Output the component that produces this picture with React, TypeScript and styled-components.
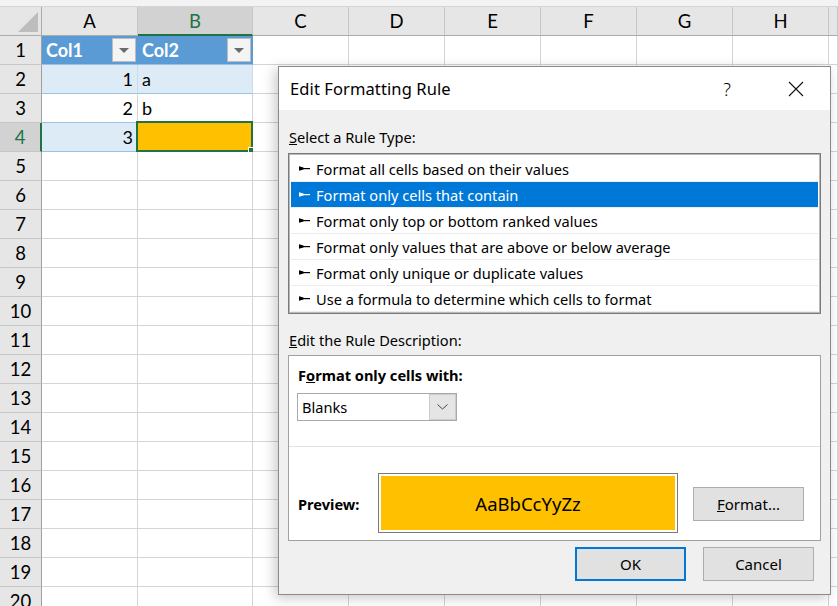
import React from "react";
import styled, { createGlobalStyle, css } from "styled-components";

const GlobalStyle = createGlobalStyle`
  html, body { margin: 0; padding: 0; background: #ffffff; }
  body { width: 838px; height: 606px; overflow: hidden; }
  * { box-sizing: border-box; }
`;

const SHEET_FONT = `Lato, "Liberation Sans", sans-serif`;
const UI_FONT = `"Noto Sans", "Open Sans", sans-serif`;

const GREEN = "#217346";

/* ---------- worksheet ---------- */

const Screen = styled.div`
  position: relative;
  width: 838px;
  height: 606px;
  overflow: hidden;
  background: #ffffff;
`;

const TopStrip = styled.div`
  height: 7px;
  background: #f3f3f3;
  border-bottom: 1px solid #d5d5d5;
`;

const Grid = styled.div`
  display: grid;
  grid-template-columns: 42px 96px 115px 96px 96px 96px 96px 96px 96px 1fr;
  grid-auto-rows: 29px;
  font-family: ${SHEET_FONT};
  color: #000;
`;

const Corner = styled.div`
  position: relative;
  background: #e6e6e6;
  border-right: 1px solid #ababab;
  border-bottom: 1px solid #ababab;
  &::after {
    content: "";
    position: absolute;
    right: 3px;
    bottom: 3px;
    width: 0;
    height: 0;
    border-left: 20px solid transparent;
    border-bottom: 20px solid #bdbdbd;
  }
`;

const ColHead = styled.div<{ $active?: boolean }>`
  display: flex;
  align-items: center;
  justify-content: center;
  font-size: 18.5px;
  background: ${(p) => (p.$active ? "#d2d2d2" : "#e6e6e6")};
  color: ${(p) => (p.$active ? GREEN : "#000")};
  border-right: 1px solid #c6c6c6;
  border-bottom: ${(p) => (p.$active ? `2px solid ${GREEN}` : "1px solid #ababab")};
`;

const RowHead = styled.div<{ $active?: boolean }>`
  display: flex;
  align-items: center;
  justify-content: center;
  font-size: 18.5px;
  background: ${(p) => (p.$active ? "#d2d2d2" : "#e6e6e6")};
  color: ${(p) => (p.$active ? GREEN : "#000")};
  border-right: ${(p) => (p.$active ? `2px solid ${GREEN}` : "1px solid #9f9f9f")};
  border-bottom: 1px solid #c6c6c6;
`;

type CellKind = "plain" | "tableHead" | "band" | "row";

const Cell = styled.div<{ $kind?: CellKind; $align?: "left" | "right"; $fill?: string }>`
  position: relative;
  display: flex;
  align-items: center;
  justify-content: ${(p) => (p.$align === "right" ? "flex-end" : "flex-start")};
  padding: 0 4px;
  font-size: 18px;
  border-right: 1px solid #d4d4d4;
  border-bottom: 1px solid #d4d4d4;
  background: #ffffff;
  ${(p) =>
    p.$kind === "tableHead" &&
    css`
      background: #5b9bd5;
      color: #ffffff;
      font-weight: 700;
      border-right-color: #5b9bd5;
      border-bottom-color: #9bc2e6;
      justify-content: space-between;
      padding-right: 1px;
    `}
  ${(p) =>
    p.$kind === "band" &&
    css`
      background: #ddebf7;
      border-bottom-color: #9bc2e6;
      border-right-color: #c9dcef;
    `}
  ${(p) =>
    p.$kind === "row" &&
    css`
      border-bottom-color: #9bc2e6;
    `}
  ${(p) =>
    p.$fill &&
    css`
      background: ${p.$fill};
    `}
`;

const FilterButton = styled.span`
  display: flex;
  align-items: center;
  justify-content: center;
  width: 24px;
  height: 24px;
  background: #f4f4f4;
  border: 1px solid #bdbdbd;
  &::before {
    content: "";
    border-left: 5px solid transparent;
    border-right: 5px solid transparent;
    border-top: 5px solid #6b6b6b;
    margin-top: 1px;
  }
`;

const Selection = styled.span`
  position: absolute;
  left: -2px;
  top: -2px;
  right: -1px;
  bottom: -1px;
  border: 2px solid ${GREEN};
  pointer-events: none;
`;

const FillHandle = styled.span`
  position: absolute;
  right: -5px;
  bottom: -5px;
  width: 7px;
  height: 7px;
  background: ${GREEN};
  outline: 1px solid #ffffff;
`;

/* ---------- dialog ---------- */

const Dialog = styled.div`
  position: absolute;
  left: 278px;
  top: 66px;
  width: 553px;
  height: 529px;
  display: flex;
  flex-direction: column;
  background: #f0f0f0;
  border: 1px solid #8a8a8a;
  box-shadow: -3px 3px 12px rgba(0, 0, 0, 0.22);
  font-family: ${UI_FONT};
  font-size: 14.6px;
  color: #000;
`;

const TitleBar = styled.div`
  display: flex;
  align-items: center;
  height: 43px;
  flex-shrink: 0;
  background: #ffffff;
  padding-left: 11px;
`;

const Title = styled.div`
  flex: 1;
  font-size: 16.5px;
  letter-spacing: 0.1px;
`;

const Controls = styled.div`
  display: flex;
  align-items: center;
  gap: 39px;
  margin-right: 19px;
`;

const TitleButton = styled.span`
  display: flex;
  align-items: center;
  justify-content: center;
  width: 30px;
  height: 30px;
  font-size: 18px;
  font-weight: 300;
`;

const Body = styled.div`
  flex: 1;
  display: flex;
  flex-direction: column;
  padding: 0 9px 0 9px;
`;

const SectionLabel = styled.div<{ $top: number }>`
  margin-top: ${(p) => p.$top}px;
  margin-left: 1px;
  height: 20px;
  line-height: 20px;
`;

const RuleList = styled.div`
  margin-top: 6px;
  height: 161px;
  background: #ffffff;
  border: 1px solid #7a7a7a;
  box-shadow: inset 0 0 0 1px #b9b9b9;
  padding: 2px 2px;
`;

const RuleItem = styled.div<{ $selected?: boolean }>`
  display: flex;
  align-items: center;
  gap: 6px;
  height: 26px;
  padding-left: 8px;
  border-bottom: 1px solid #ececec;
  background: ${(p) => (p.$selected ? "#0078d7" : "transparent")};
  color: ${(p) => (p.$selected ? "#ffffff" : "#000000")};
`;

const DescBox = styled.div`
  margin-top: 5px;
  height: 186px;
  display: flex;
  flex-direction: column;
  background: #ffffff;
  border: 1px solid #a0a0a0;
`;

const CriteriaArea = styled.div`
  height: 91px;
  padding: 9px 8px 0 8px;
  border-bottom: 1px solid #e3e3e3;
`;

const Strong = styled.div`
  font-weight: 700;
  height: 20px;
  line-height: 20px;
  padding-left: 1px;
`;

const Combo = styled.div`
  margin-top: 8px;
  display: flex;
  width: 160px;
  height: 28px;
  border: 1px solid #a9a9a9;
  background: #ffffff;
`;

const ComboText = styled.span`
  flex: 1;
  display: flex;
  align-items: center;
  padding-left: 4px;
`;

const ComboArrow = styled.span`
  width: 27px;
  display: flex;
  align-items: center;
  justify-content: center;
  background: #e5e5e5;
  border: 1px solid #cccccc;
  margin: 0;
`;

const PreviewArea = styled.div`
  display: flex;
  align-items: center;
  padding: 26px 0 0 9px;
`;

const PreviewLabel = styled.div`
  width: 80px;
  font-weight: 700;
  padding-top: 2px;
`;

const PreviewBox = styled.div`
  width: 300px;
  height: 60px;
  padding: 2px;
  border: 1px solid #7a7a7a;
  background: #ffffff;
`;

const PreviewFill = styled.div`
  height: 100%;
  display: flex;
  align-items: center;
  justify-content: center;
  background: #ffc000;
  font-size: 18.5px;
  padding-top: 1px;
`;

const Button = styled.button<{ $default?: boolean }>`
  width: 111px;
  height: 34px;
  font-family: ${UI_FONT};
  font-size: 15px;
  color: #000;
  background: #e1e1e1;
  border: ${(p) => (p.$default ? "2px solid #0078d7" : "1px solid #adadad")};
  padding: 0;
`;

const FormatButton = styled(Button)`
  margin-left: 15px;
  margin-top: 2px;
`;

const ButtonRow = styled.div`
  margin-top: 6px;
  display: flex;
  justify-content: flex-end;
  gap: 17px;
  padding-right: 7px;
`;

/* ---------- small drawings ---------- */

const RuleArrow = ({ color }: { color: string }) => (
  <svg width="11" height="7" viewBox="0 0 11 7" aria-hidden>
    <path d="M0 1.2 L4.5 2.6 L4.5 4.4 L0 5.8 Z" fill={color} />
    <rect x="4" y="3" width="7" height="1.2" fill={color} />
  </svg>
);

const CloseIcon = () => (
  <svg width="16" height="16" viewBox="0 0 16 16" aria-hidden>
    <path d="M1 1 L15 15 M15 1 L1 15" stroke="#111" strokeWidth="1.1" fill="none" />
  </svg>
);

const Chevron = () => (
  <svg width="11" height="6" viewBox="0 0 11 6" aria-hidden>
    <path d="M0.5 0.5 L5.5 5 L10.5 0.5" stroke="#444" strokeWidth="1" fill="none" />
  </svg>
);

/* ---------- data ---------- */

const COLUMNS = ["A", "B", "C", "D", "E", "F", "G", "H", ""];
const ROW_COUNT = 20;

const RULES = [
  "Format all cells based on their values",
  "Format only cells that contain",
  "Format only top or bottom ranked values",
  "Format only values that are above or below average",
  "Format only unique or duplicate values",
  "Use a formula to determine which cells to format",
];

const tableRows: Record<number, { a: string; b: string; kind: CellKind }> = {
  2: { a: "1", b: "a", kind: "band" },
  3: { a: "2", b: "b", kind: "row" },
  4: { a: "3", b: "", kind: "band" },
};

function SheetRow({ r }: { r: number }) {
  const emptyTail = COLUMNS.slice(2).map((c, i) => <Cell key={`${r}-${i}`} />);
  if (r === 1) {
    return (
      <>
        <RowHead>{r}</RowHead>
        <Cell $kind="tableHead">
          Col1
          <FilterButton />
        </Cell>
        <Cell $kind="tableHead">
          Col2
          <FilterButton />
        </Cell>
        {emptyTail}
      </>
    );
  }
  const t = tableRows[r];
  if (t) {
    const selected = r === 4;
    return (
      <>
        <RowHead $active={selected}>{r}</RowHead>
        <Cell $kind={t.kind} $align="right">
          {t.a}
        </Cell>
        <Cell $kind={t.kind} $fill={selected ? "#ffc000" : undefined}>
          {t.b}
          {selected && (
            <Selection>
              <FillHandle />
            </Selection>
          )}
        </Cell>
        {emptyTail}
      </>
    );
  }
  return (
    <>
      <RowHead>{r}</RowHead>
      <Cell />
      <Cell />
      {emptyTail}
    </>
  );
}

export default function App() {
  return (
    <Screen>
      <GlobalStyle />
      <TopStrip />
      <Grid>
        <Corner />
        {COLUMNS.map((c, i) => (
          <ColHead key={i} $active={c === "B"}>
            {c}
          </ColHead>
        ))}
        {Array.from({ length: ROW_COUNT }, (_, i) => (
          <SheetRow key={i} r={i + 1} />
        ))}
      </Grid>

      <Dialog>
        <TitleBar>
          <Title>Edit Formatting Rule</Title>
          <Controls>
            <TitleButton>?</TitleButton>
            <TitleButton>
              <CloseIcon />
            </TitleButton>
          </Controls>
        </TitleBar>
        <Body>
          <SectionLabel $top={17}>
            <u>S</u>elect a Rule Type:
          </SectionLabel>
          <RuleList>
            {RULES.map((rule, i) => (
              <RuleItem key={rule} $selected={i === 1}>
                <RuleArrow color={i === 1 ? "#ffffff" : "#000000"} />
                {rule}
              </RuleItem>
            ))}
          </RuleList>
          <SectionLabel $top={16}>
            <u>E</u>dit the Rule Description:
          </SectionLabel>
          <DescBox>
            <CriteriaArea>
              <Strong>
                F<u>o</u>rmat only cells with:
              </Strong>
              <Combo>
                <ComboText>Blanks</ComboText>
                <ComboArrow>
                  <Chevron />
                </ComboArrow>
              </Combo>
            </CriteriaArea>
            <PreviewArea>
              <PreviewLabel>Preview:</PreviewLabel>
              <PreviewBox>
                <PreviewFill>AaBbCcYyZz</PreviewFill>
              </PreviewBox>
              <FormatButton>
                <u>F</u>ormat...
              </FormatButton>
            </PreviewArea>
          </DescBox>
          <ButtonRow>
            <Button $default>OK</Button>
            <Button>Cancel</Button>
          </ButtonRow>
        </Body>
      </Dialog>
    </Screen>
  );
}
